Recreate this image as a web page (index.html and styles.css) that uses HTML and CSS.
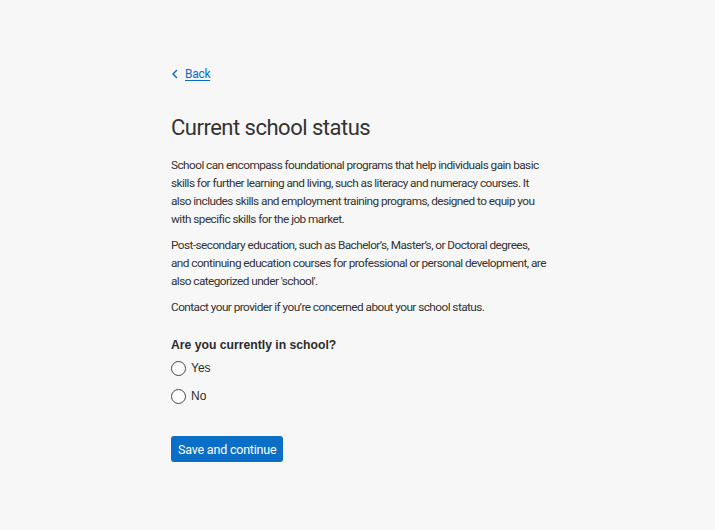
FILE: index.html
```html
<!DOCTYPE html>
<html lang="en">
<head>
<meta charset="utf-8">
<title>Current school status</title>
<link rel="stylesheet" href="styles.css">
</head>
<body>
<main class="page">
  <a class="back" href="#">
    <svg class="back-icon" width="8" height="10" viewBox="0 0 8 10" aria-hidden="true"><path d="M5.5 1.5 L2 5 L5.5 8.5" fill="none" stroke="#0b6cc7" stroke-width="1.5" stroke-linecap="round" stroke-linejoin="round"/></svg>
    <span class="back-text">Back</span>
  </a>
  <h1 class="title">Current school status</h1>
  <p class="para">School can encompass foundational programs that help individuals gain basic skills for further learning and living, such as literacy and numeracy courses. It also includes skills and employment training programs, designed to equip you with specific skills for the job market.</p>
  <p class="para">Post-secondary education, such as Bachelor’s, Master’s, or Doctoral degrees, and continuing education courses for professional or personal development, are also categorized under 'school'.</p>
  <p class="para">Contact your provider if you’re concerned about your school status.</p>
  <fieldset class="question">
    <legend class="question-label">Are you currently in school?</legend>
    <label class="option"><span class="radio"></span><span>Yes</span></label>
    <label class="option"><span class="radio"></span><span>No</span></label>
  </fieldset>
  <button class="primary" type="button">Save and continue</button>
</main>
</body>
</html>
```
FILE: styles.css
```css
html, body {
  margin: 0;
  padding: 0;
  background: #f7f7f7;
}
body {
  font-family: Roboto, "Liberation Sans", sans-serif;
  color: #333333;
}
.page {
  width: 377px;
  margin: 0 0 0 171px;
  padding-top: 66px;
  display: flex;
  flex-direction: column;
  align-items: flex-start;
}
.back {
  display: flex;
  align-items: center;
  gap: 6px;
  color: #0b6cc7;
  font-size: 12px;
  line-height: 16px;
  letter-spacing: -0.3px;
  text-decoration: none;
}
.back-icon {
  display: block;
}
.back-text {
  text-decoration: underline;
  text-underline-offset: 2px;
}
.title {
  margin: 32px 0 14px;
  font-size: 22px;
  line-height: 28px;
  font-weight: 400;
  letter-spacing: -0.5px;
  color: #333333;
}
.para {
  margin: 0 0 8px;
  font-size: 11.8px;
  line-height: 18px;
  letter-spacing: -0.55px;
  color: #333333;
}
.question {
  border: 0;
  margin: 14px 0 0;
  padding: 0;
  display: flex;
  flex-direction: column;
  gap: 10px;
}
.question-label {
  padding: 0;
  font-family: "Liberation Sans", Arial, sans-serif;
  font-weight: 700;
  font-size: 12.2px;
  line-height: 14px;
  color: #2b2b2b;
}
.question-label + .option {
  margin-top: 7px;
}
.option {
  display: flex;
  align-items: center;
  gap: 5px;
  font-family: "Liberation Sans", Arial, sans-serif;
  font-size: 12px;
  line-height: 18px;
  color: #2b2b2b;
}
.radio {
  width: 13px;
  height: 13px;
  border: 1px solid #444;
  border-radius: 50%;
  background: #fff;
}
.primary {
  margin-top: 31px;
  height: 26px;
  padding: 0 7px;
  background: #0b6fc8;
  color: #ffffff;
  border: 0;
  border-radius: 3px;
  font-family: Roboto, "Liberation Sans", sans-serif;
  font-size: 12.5px;
  letter-spacing: -0.2px;
}
```
